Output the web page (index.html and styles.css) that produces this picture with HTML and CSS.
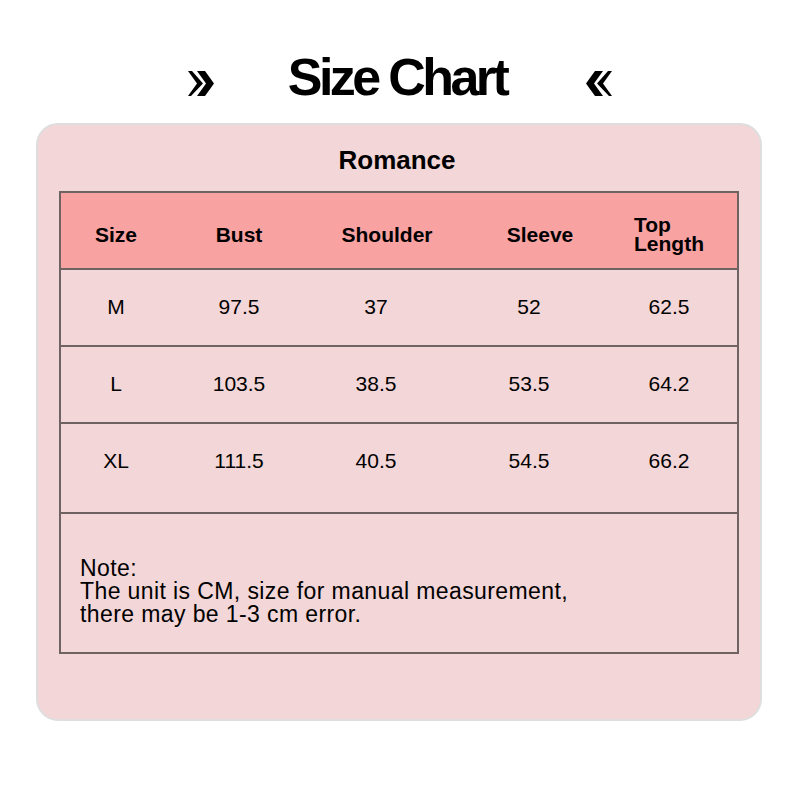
FILE: index.html
```html
<!DOCTYPE html>
<html>
<head>
<meta charset="utf-8">
<link rel="stylesheet" href="styles.css">
</head>
<body>
<header class="top">
  <svg class="guil" width="26" height="25" viewBox="0 0 26 25" aria-hidden="true">
    <path d="M0 0 L4 0 L15 12.5 L3 25 L0 25 L9 12.5 Z" fill="#000"/>
    <path d="M9 0 L17 0 L26 12.5 L17 25 L9 25 L18 12.5 Z" fill="#000"/>
  </svg>
  <h1 class="title">Size Chart</h1>
  <svg class="guil" width="26" height="25" viewBox="0 0 26 25" aria-hidden="true">
    <path d="M26 0 L22 0 L11 12.5 L23 25 L26 25 L17 12.5 Z" fill="#000"/>
    <path d="M17 0 L9 0 L0 12.5 L9 25 L17 25 L8 12.5 Z" fill="#000"/>
  </svg>
</header>
<section class="card">
  <h2 class="brand">Romance</h2>
  <div class="table">
    <div class="row head">
      <div class="cell">Size</div>
      <div class="cell">Bust</div>
      <div class="cell shift">Shoulder</div>
      <div class="cell shift">Sleeve</div>
      <div class="cell two">Top<br>Length</div>
    </div>
    <div class="row">
      <div class="cell">M</div>
      <div class="cell">97.5</div>
      <div class="cell">37</div>
      <div class="cell">52</div>
      <div class="cell">62.5</div>
    </div>
    <div class="row">
      <div class="cell">L</div>
      <div class="cell">103.5</div>
      <div class="cell">38.5</div>
      <div class="cell">53.5</div>
      <div class="cell">64.2</div>
    </div>
    <div class="row tall">
      <div class="cell">XL</div>
      <div class="cell">111.5</div>
      <div class="cell">40.5</div>
      <div class="cell">54.5</div>
      <div class="cell">66.2</div>
    </div>
    <div class="note">Note:<br>The unit is CM, size for manual measurement,<br>there may be 1-3 cm error.</div>
  </div>
</section>
</body>
</html>
```

FILE: styles.css
```css
* { box-sizing: border-box; }
html, body { margin: 0; padding: 0; background: #ffffff; }
body {
  font-family: "Liberation Sans", Arial, sans-serif;
  color: #000;
  width: 800px;
  height: 800px;
}
.top {
  display: flex;
  justify-content: center;
  align-items: flex-start;
  padding-top: 51px;
  height: 123px;
}
.guil {
  display: block;
  margin-top: 20px;
  flex: none;
}
.title {
  margin: 0 80px 0 74px;
  font-size: 52px;
  line-height: 52px;
  font-weight: bold;
  letter-spacing: -3.6px;
}
.card {
  margin-left: 36px;
  width: 726px;
  height: 598px;
  background: #f3d6d7;
  border: 2px solid #dedede;
  border-radius: 22px;
  padding: 22px 0 0 21px;
}
.brand {
  margin: 0;
  text-align: center;
  padding-right: 25px;
  font-size: 26px;
  line-height: 26px;
  font-weight: bold;
  height: 44px;
}
.table {
  width: 680px;
  border: 2px solid #6f6262;
}
.row {
  display: grid;
  grid-template-columns: 110px 136px 138px 168px 112px;
  height: 77px;
  border-top: 2px solid #6f6262;
  font-size: 21px;
  line-height: 21px;
}
.row.head {
  border-top: none;
  height: 75px;
  background: #f8a2a2;
  font-weight: bold;
}
.row.tall { height: 90px; }
.cell {
  text-align: center;
  padding-top: 26px;
}
.head .cell { padding-top: 31px; }
.head .cell.shift { padding-left: 22px; }
.head .cell.two {
  text-align: left;
  padding-left: 21px;
  padding-top: 22px;
  line-height: 19px;
}
.note {
  border-top: 2px solid #6f6262;
  height: 140px;
  padding: 43px 0 0 19px;
  font-size: 23px;
  line-height: 23px;
  letter-spacing: 0.4px;
}
```
